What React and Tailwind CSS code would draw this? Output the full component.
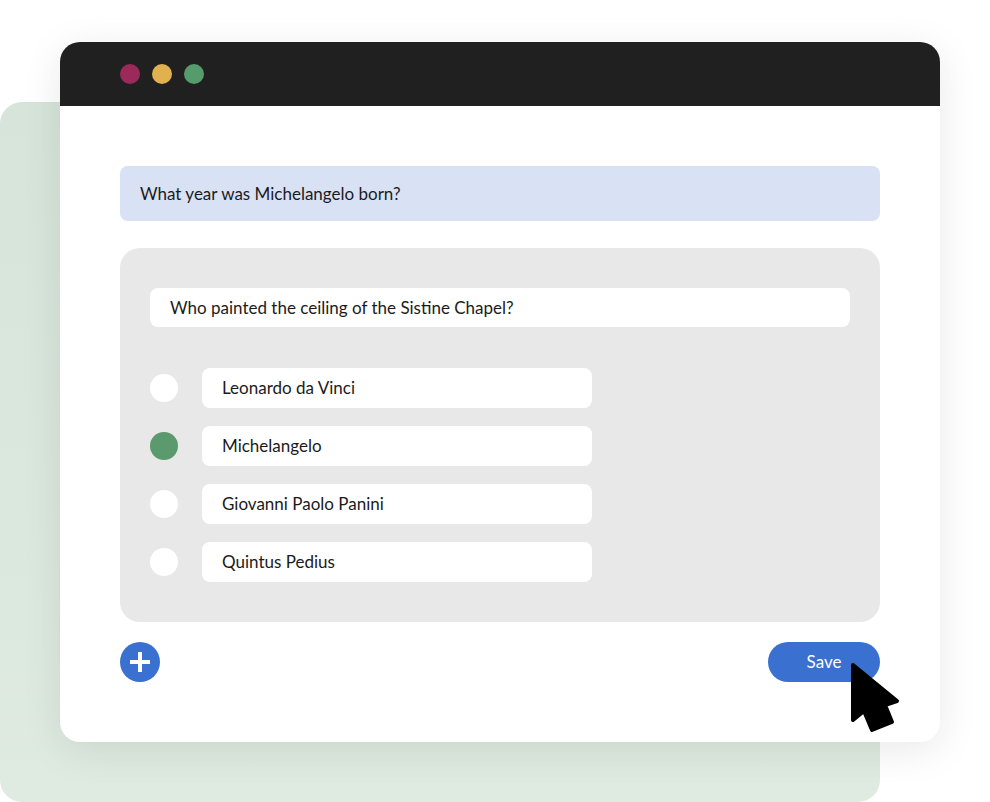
import { useState } from "react";

const options = [
  "Leonardo da Vinci",
  "Michelangelo",
  "Giovanni Paolo Panini",
  "Quintus Pedius",
];

function Cursor() {
  return (
    <svg
      className="absolute left-[849px] top-[661px]"
      width="52"
      height="74"
      viewBox="-2 -2 52 74"
    >
      <path
        d="M2 2 L46 38 L34 42 L41 59 L21 67 L13 48 L2 57 Z"
        fill="#000"
        stroke="#000"
        strokeWidth="4"
        strokeLinejoin="round"
      />
    </svg>
  );
}

function App() {
  const [selected, setSelected] = useState(1);

  return (
    <div className="relative w-[990px] h-[802px] bg-white overflow-hidden font-['Lato','Noto_Sans',sans-serif] text-[#1b1b1b]">
      <div className="absolute left-0 top-[102px] w-[880px] h-[700px] rounded-[22px] bg-gradient-to-b from-[#d6e4d9] to-[#dfebe1]"></div>
      <div className="relative ml-[60px] mt-[42px] w-[880px] h-[700px] rounded-[20px] bg-white overflow-hidden shadow-[0_8px_40px_rgba(0,0,0,0.09)]">
        <div className="h-[64px] bg-[#202020] flex items-center gap-3 pl-[60px]">
          <span className="w-5 h-5 rounded-full bg-[#9b2a5b]"></span>
          <span className="w-5 h-5 rounded-full bg-[#e1b14e]"></span>
          <span className="w-5 h-5 rounded-full bg-[#569b6b]"></span>
        </div>
        <div className="px-[60px] pt-[60px]">
          <div className="h-[55px] rounded-lg bg-[#d8e2f4] flex items-center px-5 text-[17px]">
            What year was Michelangelo born?
          </div>
          <div className="mt-[27px] rounded-[20px] bg-[#e8e8e8] px-[30px] pt-10 pb-10">
            <div className="h-[39px] rounded-lg bg-white flex items-center px-5 text-[17px]">
              Who painted the ceiling of the Sistine Chapel?
            </div>
            <div className="mt-[41px] flex flex-col gap-[18px]">
              {options.map((opt, i) => (
                <div key={opt} className="flex items-center gap-6" onClick={() => setSelected(i)}>
                  <span
                    className={
                      i === selected
                        ? "w-7 h-7 rounded-full bg-[#5a9a6c]"
                        : "w-7 h-7 rounded-full bg-white"
                    }
                  ></span>
                  <div className="w-[390px] h-10 rounded-lg bg-white flex items-center px-5 text-[17px]">
                    {opt}
                  </div>
                </div>
              ))}
            </div>
          </div>
          <div className="mt-5 flex items-center justify-between">
            <button className="w-10 h-10 rounded-full bg-[#3a70d0] flex items-center justify-center">
              <svg width="22" height="22" viewBox="0 0 22 22">
                <rect x="9" y="1" width="4" height="20" fill="#fff" />
                <rect x="1" y="9" width="20" height="4" fill="#fff" />
              </svg>
            </button>
            <button className="w-[112px] h-10 rounded-full bg-[#3a70d0] text-white text-[17px]">
              Save
            </button>
          </div>
        </div>
      </div>
      <Cursor />
    </div>
  );
}

export default App;
